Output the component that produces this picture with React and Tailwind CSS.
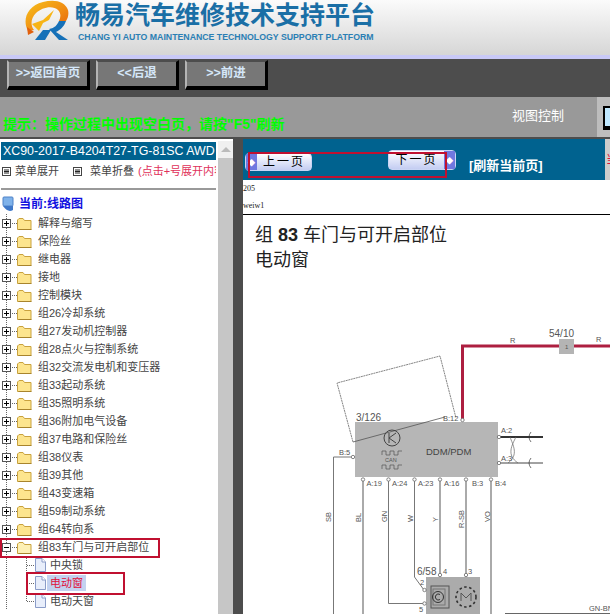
import React from "react";

const CJK = "font-['Liberation_Sans','Noto_Sans_CJK_SC',sans-serif]";

const folders = [
  "解释与缩写", "保险丝", "继电器", "接地", "控制模块", "组26冷却系统", "组27发动机控制器",
  "组28点火与控制系统", "组32交流发电机和变压器", "组33起动系统", "组35照明系统", "组36附加电气设备",
  "组37电路和保险丝", "组38仪表", "组39其他", "组43变速箱", "组59制动系统", "组64转向系",
];

const Logo = () => (
  <svg width="50" height="44" viewBox="0 0 50 44" className="shrink-0">
    <defs>
      <linearGradient id="ring" x1="0" y1="0" x2="1" y2="1">
        <stop offset="0" stopColor="#f6c21c" />
        <stop offset="0.6" stopColor="#f08a12" />
        <stop offset="1" stopColor="#e2600c" />
      </linearGradient>
    </defs>
    <path d="M5 31 C-1 20 4 6 20 2 C31 -1 42 1 45 10 C46 14 45 18 43 21 L36 21 C38 17 38 13 35 10 C30 5 19 7 13 13 C8 18 7 25 11 30 Z" fill="url(#ring)" />
    <path d="M9 24 L20 20 L31 10 L26 20 L20 23 L16 31 Z" fill="#f7b416" />
    <path d="M4 27 L11 32 L5 35 Z" fill="#e2600c" />
    <path d="M12 40 L20 30 L28 30 L22 40 Z" fill="#1671b8" />
    <path d="M43 21 C41 27 37 30 33 32 L45 40 L36 40 L26 29 C32 28 34 25 36 21 Z" fill="#1671b8" />
  </svg>
);

const NavButton = ({ label }) => (
  <button className={`${CJK} w-[83px] h-[30px] bg-[#777777] border-l-[2px] border-t-[2px] border-l-[#b4b4b4] border-t-[#4d4d4d] border-r-[3px] border-b-[4px] border-r-black border-b-black text-[12.5px] font-bold whitespace-nowrap text-[#d4e6f8] pb-[2px]`}>
    {label}
  </button>
);

const PageButton = ({ label, arrow, className }) => (
  <div className={`flex h-[18px] items-center rounded-sm border border-[#c9d4f4] bg-gradient-to-b from-white to-[#c4cdf2] ${className}`}>
    {arrow === "left" && <span className="flex h-full w-[11px] items-center justify-center bg-[#6f78e0] text-[9px] font-bold text-white">◆</span>}
    <span className={`${CJK} flex-1 text-center text-[12px] leading-none tracking-[2px] text-black`}>{label}</span>
    {arrow === "right" && <span className="flex h-full w-[11px] items-center justify-center bg-[#6f78e0] text-[9px] font-bold text-white">◆</span>}
  </div>
);

const TreeGutter = ({ open }) => (
  <svg width="34" height="18" viewBox="0 0 34 18" className="shrink-0">
    <line x1="6.5" y1="0" x2="6.5" y2="18" stroke="#666" strokeDasharray="1 1" />
    <line x1="10" y1="9.5" x2="17" y2="9.5" stroke="#666" strokeDasharray="1 1" />
    <rect x="2.5" y="5.5" width="8" height="8" fill="#fff" stroke="#555" />
    <line x1="4" y1="9.5" x2="9" y2="9.5" stroke="#000" />
    {!open && <line x1="6.5" y1="7" x2="6.5" y2="12" stroke="#000" />}
    <path d="M17.5 15.5 V6 L19 4.5 H23 L24.5 6.5 H31 V15.5 Z" fill={open ? "#fdf0b4" : "#fde58e"} stroke="#c9a23e" />
    <path d="M18.5 15.5 H31.5" stroke="#a8842c" />
  </svg>
);

const PageGutter = ({ last }) => (
  <svg width="47" height="18" viewBox="0 0 47 18" className="shrink-0">
    <line x1="6.5" y1="0" x2="6.5" y2="18" stroke="#666" strokeDasharray="1 1" />
    <line x1="26.5" y1="0" x2="26.5" y2={last ? 9 : 18} stroke="#666" strokeDasharray="1 1" />
    <line x1="27" y1="9.5" x2="36" y2="9.5" stroke="#666" strokeDasharray="1 1" />
    <path d="M35.5 2.5 H42 L45.5 6 V15.5 H35.5 Z" fill="#e8eefb" stroke="#8a9cc8" />
    <path d="M42 2.5 V6 H45.5" fill="#fff" stroke="#8a9cc8" />
  </svg>
);

const FolderRow = ({ label, open }) => (
  <div className="flex h-[18px] items-center">
    <TreeGutter open={open} />
    <span className={`${CJK} pl-[4px] text-[11px] whitespace-nowrap text-[#444]`}>{label}</span>
  </div>
);

const PageRow = ({ label, active, last }) => (
  <div className="flex h-[18px] items-center">
    <PageGutter last={last} />
    <span className={`${CJK} px-[3px] py-[1px] text-[11px] leading-[14px] whitespace-nowrap ${active ? "bg-[#c3d2f0] text-[#e0103a]" : "text-[#444]"}`}>
      {label}
    </span>
  </div>
);

const MenuIcon = () => (
  <svg width="9" height="9" viewBox="0 0 9 9" className="shrink-0">
    <rect x="0.5" y="0.5" width="8" height="8" fill="#fff" stroke="#444" />
    <path d="M2 3 H7 M2 4.5 H7 M2 6 H7" stroke="#222" />
  </svg>
);

const Sidebar = () => (
  <div className="flex w-[233px] shrink-0 bg-white">
    <div className="w-[218px] shrink-0 overflow-hidden pl-[1px] pt-[3px]">
      <div className="flex h-[18px] w-[215px] items-center overflow-hidden bg-[#00628f] pl-[2px] font-['Liberation_Sans',sans-serif] text-[12.4px] whitespace-nowrap text-white">
        XC90-2017-B4204T27-TG-81SC AWD
      </div>
      <div className={`${CJK} flex h-[22px] w-[215px] items-center overflow-hidden pl-[1px] text-[11px] whitespace-nowrap text-[#444]`}>
        <MenuIcon />
        <span className="ml-[4px]">菜单展开</span>
        <span className="ml-[14px]"><MenuIcon /></span>
        <span className="ml-[8px]">菜单折叠</span>
        <span className="ml-[4px] text-[#e0305a]">(点击+号展开内容)</span>
      </div>
      <div className="mt-[6px] h-[2px] w-[215px] bg-[#999]" />
      <div className="-ml-[1px] flex h-[24px] items-end pb-[1px] pl-[2px]">
        <svg width="12" height="17" viewBox="0 0 12 17" className="shrink-0">
          <rect x="1" y="1" width="10" height="9" rx="1" fill="#7fb2ea" stroke="#4f82c8" />
          <path d="M1 10 Q6 17 11 14 L11 10 Z" fill="#3f78c8" />
        </svg>
        <span className={`${CJK} ml-[5px] text-[12px] font-bold text-[#1010e0]`}>当前:线路图</span>
      </div>
      <div className="-ml-[1px]">
        {folders.map((name) => <FolderRow key={name} label={name} />)}
        <FolderRow label="组83车门与可开启部位" open />
        <PageRow label="中央锁" />
        <PageRow label="电动窗" active />
        <PageRow label="电动天窗" last />
      </div>
    </div>
    <div className="mt-[2px] w-[15px] shrink-0 bg-[#c6c6c6]">
      <div className="flex h-[17px] items-center justify-center bg-[#f0f0f0] text-[#bbb]">
        <div className="border-x-[5px] border-b-[5px] border-x-transparent border-b-[#bbb]" />
      </div>
    </div>
  </div>
);

const Pin = ({ x, y }) => <circle cx={x} cy={y} r="1.7" fill="#fff" stroke="#666" strokeWidth="0.8" />;

const Wire = ({ d, w = 1 }) => <path d={d} fill="none" stroke={w > 1 ? "#aaa" : "#777"} strokeWidth={w} />;

const Label = ({ x, y, size = 7.5, rotate, children, fill = "#555" }) => (
  <text x={x} y={y} fontSize={size} fill={fill} fontFamily="Liberation Sans, sans-serif" transform={rotate ? `rotate(-90 ${x} ${y})` : undefined}>
    {children}
  </text>
);

const Diagram = () => (
  <svg width="367" height="335" viewBox="243 279 367 335" className="block">
    {/* red supply line */}
    <path d="M462.5 420 V346 H610" fill="none" stroke="#ad1f40" strokeWidth="3" />
    <rect x="559" y="339" width="15" height="15" fill="#b4b4b4" />
    <Label x="565" y="349" size="6">1</Label>
    <Label x="549" y="337" size="10">54/10</Label>
    <Label x="510" y="343">R</Label>
    <Label x="596" y="342">R</Label>

    {/* door switch outline */}
    <path d="M353 442 L337 383 L440 356 L456 418" fill="none" stroke="#666" strokeWidth="0.8" strokeDasharray="2 0.6" />

    {/* control module */}
    <rect x="355" y="422" width="143" height="55" fill="#b6b6b6" />
    <path d="M353 442 L445 417" stroke="#555" strokeWidth="0.8" fill="none" />
    <Label x="356" y="421" size="10">3/126</Label>
    <Label x="443" y="421">B:12</Label>
    <Label x="339" y="455">B:5</Label>
    <circle cx="392" cy="438" r="8" fill="none" stroke="#444" />
    <path d="M389 433 V443 M389 438 L396 433 M389 438 L396 443" stroke="#444" fill="none" />
    <path d="M382 455 V451 H386 V455 H390 V451 H394 V455 H398 V451 H402" fill="none" stroke="#555" strokeWidth="0.7" />
    <Label x="385" y="462" size="5.5">CAN</Label>
    <path d="M382 469 V465 H386 V469 H390 V465 H394 V469 H398 V465 H402" fill="none" stroke="#555" strokeWidth="0.7" />
    <Label x="426" y="455" size="9.5" fill="#444">DDM/PDM</Label>

    {/* twisted pair */}
    <Label x="501" y="433">A:2</Label>
    <Label x="501" y="461">A:3</Label>
    <path d="M499 437 H543" stroke="#333" strokeWidth="2" />
    <path d="M499 463 H543" stroke="#444" strokeWidth="1" />
    <path d="M510 437 C513 445 519 455 508 463 M516 437 C512 445 506 455 518 463" fill="none" stroke="#666" strokeWidth="0.7" />
    <path d="M531 432 Q527 437 531 442 M531 458 Q527 463 531 468" fill="none" stroke="#333" strokeWidth="0.7" />
    <Pin x="499" y="437" />
    <Pin x="499" y="463" />
    <Pin x="353" y="457" />
    <Pin x="462.5" y="420" />

    {/* wires down from the module */}
    <Wire d="M351 457 H333.5 V614" />
    <Wire d="M363 480 V614" w={2} />
    <Wire d="M388.5 480 V603.5 H424" />
    <Wire d="M414.5 480 V577 L424 590" />
    <Wire d="M440 480 V575" w={2} />
    <Wire d="M466 480 V575" w={2} />
    <Wire d="M491 480 V614" w={2} />
    {[363, 388.5, 414.5, 440, 466, 491].map((x) => <Pin key={x} x={x} y="479.5" />)}
    <Label x="366.5" y="485.5">A:19</Label>
    <Label x="392" y="485.5">A:24</Label>
    <Label x="418" y="485.5">A:23</Label>
    <Label x="444" y="485.5">A:16</Label>
    <Label x="472" y="485.5">B:3</Label>
    <Label x="495" y="485.5">B:4</Label>
    <Label x="331" y="522" rotate>SB</Label>
    <Label x="361" y="522" rotate>BL</Label>
    <Label x="387" y="522" rotate>GN</Label>
    <Label x="413" y="522" rotate>W</Label>
    <Label x="438" y="522" rotate>Y</Label>
    <Label x="464" y="528" rotate>R-SB</Label>
    <Label x="490" y="522" rotate>VO</Label>

    {/* window motor */}
    <rect x="426" y="577" width="54" height="37" fill="#ababab" />
    <Label x="417" y="575" size="10">6/58</Label>
    <Label x="443" y="574">4</Label>
    <Label x="468" y="574">3</Label>
    <Label x="420" y="585">2</Label>
    <Label x="419" y="612">5</Label>
    <rect x="431" y="586" width="18" height="22" fill="none" stroke="#555" />
    <rect x="433" y="589" width="12" height="16" fill="none" stroke="#777" />
    <circle cx="438" cy="597" r="5.5" fill="none" stroke="#333" />
    <path d="M440 594.5 A3 3 0 1 0 440 599.5" fill="none" stroke="#333" />
    <circle cx="466" cy="597" r="10" fill="none" stroke="#333" strokeDasharray="2.5 2.5" strokeWidth="1.6" />
    <path d="M461 601 V593 L466 598 L471 593 V601" fill="none" stroke="#555" />
    <Pin x="440" y="575" />
    <Pin x="466" y="575" />
    <Pin x="424.5" y="590" />
    <Pin x="424.5" y="603.5" />

    <Label x="589" y="611">GN-BN</Label>
    <path d="M505 613.5 H610" stroke="#666" />
  </svg>
);

const Content = () => (
  <div className="min-w-0 flex-1 bg-white">
    <div className="flex h-[41px]">
      <div className="relative w-[362px] shrink-0 bg-[#00628f]">
        <PageButton label="上一页" arrow="left" className="absolute left-[2px] top-[14px] w-[67px]" />
        <PageButton label="下一页" arrow="right" className="absolute left-[145px] top-[11px] h-[20px] w-[68px]" />
        <span className={`${CJK} absolute left-[226px] top-[17px] text-[13px] font-bold whitespace-nowrap text-white`}>[刷新当前页]</span>
      </div>
      <div className={`${CJK} flex-1 overflow-hidden bg-[#cccccc] pt-[12px] pl-[1px] text-[12px] whitespace-nowrap text-[#e0103a]`}>当前页</div>
    </div>
    <div className="h-[34px] font-['Liberation_Serif',serif] text-[8px] leading-[17px] text-[#222]">
      <div>205</div>
      <div>weiw1</div>
    </div>
    <div className="border-t border-black">
      <div className={`${CJK} h-[64px] pl-[12px] pt-[8px] text-[18px] leading-[25px] text-[#222]`}>
        <div>组 <b>83</b> 车门与可开启部位</div>
        <div>电动窗</div>
      </div>
      <Diagram />
    </div>
  </div>
);

export default function App() {
  return (
    <div className="relative flex h-[614px] w-[610px] flex-col overflow-hidden bg-[#4d4d4d]">
      <header className="flex h-[55px] shrink-0 items-start bg-gradient-to-b from-[#fbfbfb] to-[#d6d6d6] pl-[23px]">
        <Logo />
        <div className="ml-[2px] pt-[1px]">
          <div className={`${CJK} text-[25px] leading-[29px] font-bold whitespace-nowrap text-[#1a6fa6]`}>畅易汽车维修技术支持平台</div>
          <div className="mt-[2px] ml-[3px] font-['Liberation_Sans',sans-serif] text-[8.75px] leading-[11px] font-bold whitespace-nowrap text-[#2b7fb4]">
            CHANG YI AUTO MAINTENANCE TECHNOLOGY SUPPORT PLATFORM
          </div>
        </div>
      </header>
      <div className="h-[4px] shrink-0 bg-[#c9c9f7]" />
      <nav className="flex h-[38px] shrink-0 gap-[6px] pl-[7px] pt-[1px]">
        <NavButton label=">>返回首页" />
        <NavButton label="<<后退" />
        <NavButton label=">>前进" />
      </nav>
      <div className="flex h-[40px] shrink-0 items-center bg-[#999999]">
        <span className={`${CJK} w-[512px] pl-[3px] pt-[14px] text-[14px] font-bold whitespace-nowrap text-[#00ff00]`}>提示：操作过程中出现空白页，请按"F5"刷新</span>
        <span className={`${CJK} pb-[2px] text-[13px] text-white`}>视图控制</span>
        <div className="ml-[33px] flex h-full flex-1 items-start bg-[#bdbdbd] pl-[6px] pt-[9px]">
          <div className="h-[24px] flex-1 border-2 border-b-[4px] border-black border-r-0 bg-[#c0e8ff]" />
        </div>
      </div>
      <div className="flex min-h-0 flex-1 gap-[10px] pt-[2px]">
        <Sidebar />
        <Content />
      </div>

      {/* red annotation boxes */}
      <div className="absolute left-[248px] top-[152px] h-[26px] w-[199px] border-[2px] border-[#c01030]" />
      <div className="absolute left-0 top-[538px] h-[20px] w-[160px] border-[2px] border-[#c01030]" />
      <div className="absolute left-[26px] top-[572px] h-[23px] w-[99px] border-[2px] border-[#c01030]" />
    </div>
  );
}
